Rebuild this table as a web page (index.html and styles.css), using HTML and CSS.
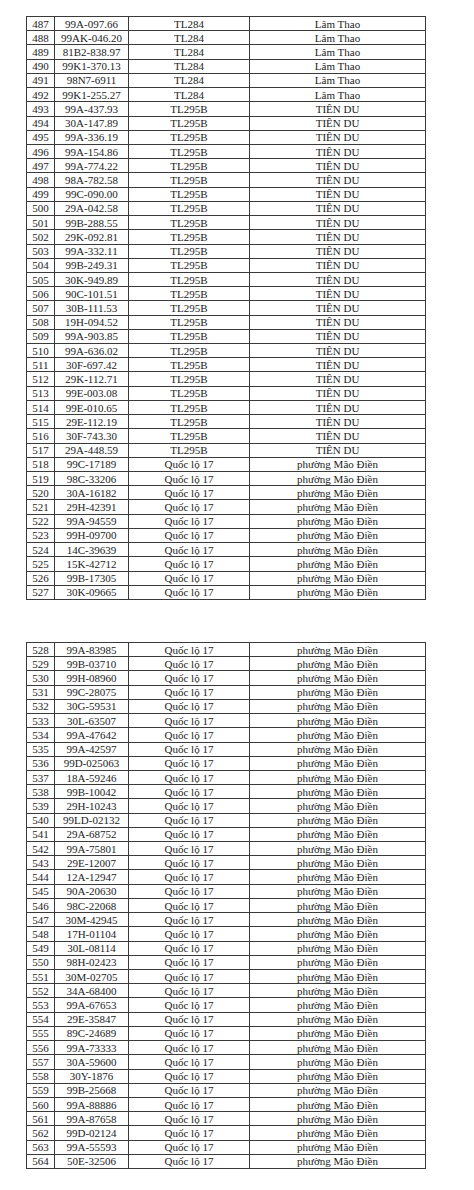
FILE: index.html
```html
<!DOCTYPE html>
<html lang="vi">
<head>
<meta charset="utf-8">
<title>Danh sách</title>
<link rel="stylesheet" href="styles.css">
</head>
<body>
<div class="page">
<table class="list">
<colgroup><col class="c-no"><col class="c-plate"><col class="c-road"><col class="c-place"></colgroup>
<tbody>
<tr><td>487</td><td>99A-097.66</td><td>TL284</td><td>Lâm Thao</td></tr>
<tr><td>488</td><td>99AK-046.20</td><td>TL284</td><td>Lâm Thao</td></tr>
<tr><td>489</td><td>81B2-838.97</td><td>TL284</td><td>Lâm Thao</td></tr>
<tr><td>490</td><td>99K1-370.13</td><td>TL284</td><td>Lâm Thao</td></tr>
<tr><td>491</td><td>98N7-6911</td><td>TL284</td><td>Lâm Thao</td></tr>
<tr><td>492</td><td>99K1-255.27</td><td>TL284</td><td>Lâm Thao</td></tr>
<tr><td>493</td><td>99A-437.93</td><td>TL295B</td><td>TIÊN DU</td></tr>
<tr><td>494</td><td>30A-147.89</td><td>TL295B</td><td>TIÊN DU</td></tr>
<tr><td>495</td><td>99A-336.19</td><td>TL295B</td><td>TIÊN DU</td></tr>
<tr><td>496</td><td>99A-154.86</td><td>TL295B</td><td>TIÊN DU</td></tr>
<tr><td>497</td><td>99A-774.22</td><td>TL295B</td><td>TIÊN DU</td></tr>
<tr><td>498</td><td>98A-782.58</td><td>TL295B</td><td>TIÊN DU</td></tr>
<tr><td>499</td><td>99C-090.00</td><td>TL295B</td><td>TIÊN DU</td></tr>
<tr><td>500</td><td>29A-042.58</td><td>TL295B</td><td>TIÊN DU</td></tr>
<tr><td>501</td><td>99B-288.55</td><td>TL295B</td><td>TIÊN DU</td></tr>
<tr><td>502</td><td>29K-092.81</td><td>TL295B</td><td>TIÊN DU</td></tr>
<tr><td>503</td><td>99A-332.11</td><td>TL295B</td><td>TIÊN DU</td></tr>
<tr><td>504</td><td>99B-249.31</td><td>TL295B</td><td>TIÊN DU</td></tr>
<tr><td>505</td><td>30K-949.89</td><td>TL295B</td><td>TIÊN DU</td></tr>
<tr><td>506</td><td>90C-101.51</td><td>TL295B</td><td>TIÊN DU</td></tr>
<tr><td>507</td><td>30B-111.53</td><td>TL295B</td><td>TIÊN DU</td></tr>
<tr><td>508</td><td>19H-094.52</td><td>TL295B</td><td>TIÊN DU</td></tr>
<tr><td>509</td><td>99A-903.85</td><td>TL295B</td><td>TIÊN DU</td></tr>
<tr><td>510</td><td>99A-636.02</td><td>TL295B</td><td>TIÊN DU</td></tr>
<tr><td>511</td><td>30F-697.42</td><td>TL295B</td><td>TIÊN DU</td></tr>
<tr><td>512</td><td>29K-112.71</td><td>TL295B</td><td>TIÊN DU</td></tr>
<tr><td>513</td><td>99E-003.08</td><td>TL295B</td><td>TIÊN DU</td></tr>
<tr><td>514</td><td>99E-010.65</td><td>TL295B</td><td>TIÊN DU</td></tr>
<tr><td>515</td><td>29E-112.19</td><td>TL295B</td><td>TIÊN DU</td></tr>
<tr><td>516</td><td>30F-743.30</td><td>TL295B</td><td>TIÊN DU</td></tr>
<tr><td>517</td><td>29A-448.59</td><td>TL295B</td><td>TIÊN DU</td></tr>
<tr><td>518</td><td>99C-17189</td><td>Quốc lộ 17</td><td>phường Mão Điền</td></tr>
<tr><td>519</td><td>98C-33206</td><td>Quốc lộ 17</td><td>phường Mão Điền</td></tr>
<tr><td>520</td><td>30A-16182</td><td>Quốc lộ 17</td><td>phường Mão Điền</td></tr>
<tr><td>521</td><td>29H-42391</td><td>Quốc lộ 17</td><td>phường Mão Điền</td></tr>
<tr><td>522</td><td>99A-94559</td><td>Quốc lộ 17</td><td>phường Mão Điền</td></tr>
<tr><td>523</td><td>99H-09700</td><td>Quốc lộ 17</td><td>phường Mão Điền</td></tr>
<tr><td>524</td><td>14C-39639</td><td>Quốc lộ 17</td><td>phường Mão Điền</td></tr>
<tr><td>525</td><td>15K-42712</td><td>Quốc lộ 17</td><td>phường Mão Điền</td></tr>
<tr><td>526</td><td>99B-17305</td><td>Quốc lộ 17</td><td>phường Mão Điền</td></tr>
<tr><td>527</td><td>30K-09665</td><td>Quốc lộ 17</td><td>phường Mão Điền</td></tr>
</tbody>
</table>

<table class="list">
<colgroup><col class="c-no"><col class="c-plate"><col class="c-road"><col class="c-place"></colgroup>
<tbody>
<tr><td>528</td><td>99A-83985</td><td>Quốc lộ 17</td><td>phường Mão Điền</td></tr>
<tr><td>529</td><td>99B-03710</td><td>Quốc lộ 17</td><td>phường Mão Điền</td></tr>
<tr><td>530</td><td>99H-08960</td><td>Quốc lộ 17</td><td>phường Mão Điền</td></tr>
<tr><td>531</td><td>99C-28075</td><td>Quốc lộ 17</td><td>phường Mão Điền</td></tr>
<tr><td>532</td><td>30G-59531</td><td>Quốc lộ 17</td><td>phường Mão Điền</td></tr>
<tr><td>533</td><td>30L-63507</td><td>Quốc lộ 17</td><td>phường Mão Điền</td></tr>
<tr><td>534</td><td>99A-47642</td><td>Quốc lộ 17</td><td>phường Mão Điền</td></tr>
<tr><td>535</td><td>99A-42597</td><td>Quốc lộ 17</td><td>phường Mão Điền</td></tr>
<tr><td>536</td><td>99D-025063</td><td>Quốc lộ 17</td><td>phường Mão Điền</td></tr>
<tr><td>537</td><td>18A-59246</td><td>Quốc lộ 17</td><td>phường Mão Điền</td></tr>
<tr><td>538</td><td>99B-10042</td><td>Quốc lộ 17</td><td>phường Mão Điền</td></tr>
<tr><td>539</td><td>29H-10243</td><td>Quốc lộ 17</td><td>phường Mão Điền</td></tr>
<tr><td>540</td><td>99LD-02132</td><td>Quốc lộ 17</td><td>phường Mão Điền</td></tr>
<tr><td>541</td><td>29A-68752</td><td>Quốc lộ 17</td><td>phường Mão Điền</td></tr>
<tr><td>542</td><td>99A-75801</td><td>Quốc lộ 17</td><td>phường Mão Điền</td></tr>
<tr><td>543</td><td>29E-12007</td><td>Quốc lộ 17</td><td>phường Mão Điền</td></tr>
<tr><td>544</td><td>12A-12947</td><td>Quốc lộ 17</td><td>phường Mão Điền</td></tr>
<tr><td>545</td><td>90A-20630</td><td>Quốc lộ 17</td><td>phường Mão Điền</td></tr>
<tr><td>546</td><td>98C-22068</td><td>Quốc lộ 17</td><td>phường Mão Điền</td></tr>
<tr><td>547</td><td>30M-42945</td><td>Quốc lộ 17</td><td>phường Mão Điền</td></tr>
<tr><td>548</td><td>17H-01104</td><td>Quốc lộ 17</td><td>phường Mão Điền</td></tr>
<tr><td>549</td><td>30L-08114</td><td>Quốc lộ 17</td><td>phường Mão Điền</td></tr>
<tr><td>550</td><td>98H-02423</td><td>Quốc lộ 17</td><td>phường Mão Điền</td></tr>
<tr><td>551</td><td>30M-02705</td><td>Quốc lộ 17</td><td>phường Mão Điền</td></tr>
<tr><td>552</td><td>34A-68400</td><td>Quốc lộ 17</td><td>phường Mão Điền</td></tr>
<tr><td>553</td><td>99A-67653</td><td>Quốc lộ 17</td><td>phường Mão Điền</td></tr>
<tr><td>554</td><td>29E-35847</td><td>Quốc lộ 17</td><td>phường Mão Điền</td></tr>
<tr><td>555</td><td>89C-24689</td><td>Quốc lộ 17</td><td>phường Mão Điền</td></tr>
<tr><td>556</td><td>99A-73333</td><td>Quốc lộ 17</td><td>phường Mão Điền</td></tr>
<tr><td>557</td><td>30A-59600</td><td>Quốc lộ 17</td><td>phường Mão Điền</td></tr>
<tr><td>558</td><td>30Y-1876</td><td>Quốc lộ 17</td><td>phường Mão Điền</td></tr>
<tr><td>559</td><td>99B-25668</td><td>Quốc lộ 17</td><td>phường Mão Điền</td></tr>
<tr><td>560</td><td>99A-88886</td><td>Quốc lộ 17</td><td>phường Mão Điền</td></tr>
<tr><td>561</td><td>99A-87658</td><td>Quốc lộ 17</td><td>phường Mão Điền</td></tr>
<tr><td>562</td><td>99D-02124</td><td>Quốc lộ 17</td><td>phường Mão Điền</td></tr>
<tr><td>563</td><td>99A-55593</td><td>Quốc lộ 17</td><td>phường Mão Điền</td></tr>
<tr><td>564</td><td>50E-32506</td><td>Quốc lộ 17</td><td>phường Mão Điền</td></tr>
</tbody>
</table>
</div>
</body>
</html>
```

FILE: styles.css
```css
html, body {
  margin: 0;
  padding: 0;
  background: #ffffff;
}

.page {
  display: flex;
  flex-direction: column;
  align-items: flex-start;
  gap: 42px;
  padding: 16px 0 0 26px;
}

.list {
  border-collapse: collapse;
  table-layout: fixed;
  width: 399px;
  font-family: "Liberation Serif", "Times New Roman", serif;
  font-size: 11px;
  color: #1c1c1c;
  border: 1.5px solid #333333;
}

.c-no { width: 28px; }
.c-plate { width: 74px; }
.c-road { width: 121px; }
.c-place { width: 176px; }

.list td {
  border: 1px solid #3a3a3a;
  padding: 0;
  height: 13.22px;
  line-height: 12px;
  text-align: center;
  vertical-align: middle;
  white-space: nowrap;
  overflow: hidden;
}
```
